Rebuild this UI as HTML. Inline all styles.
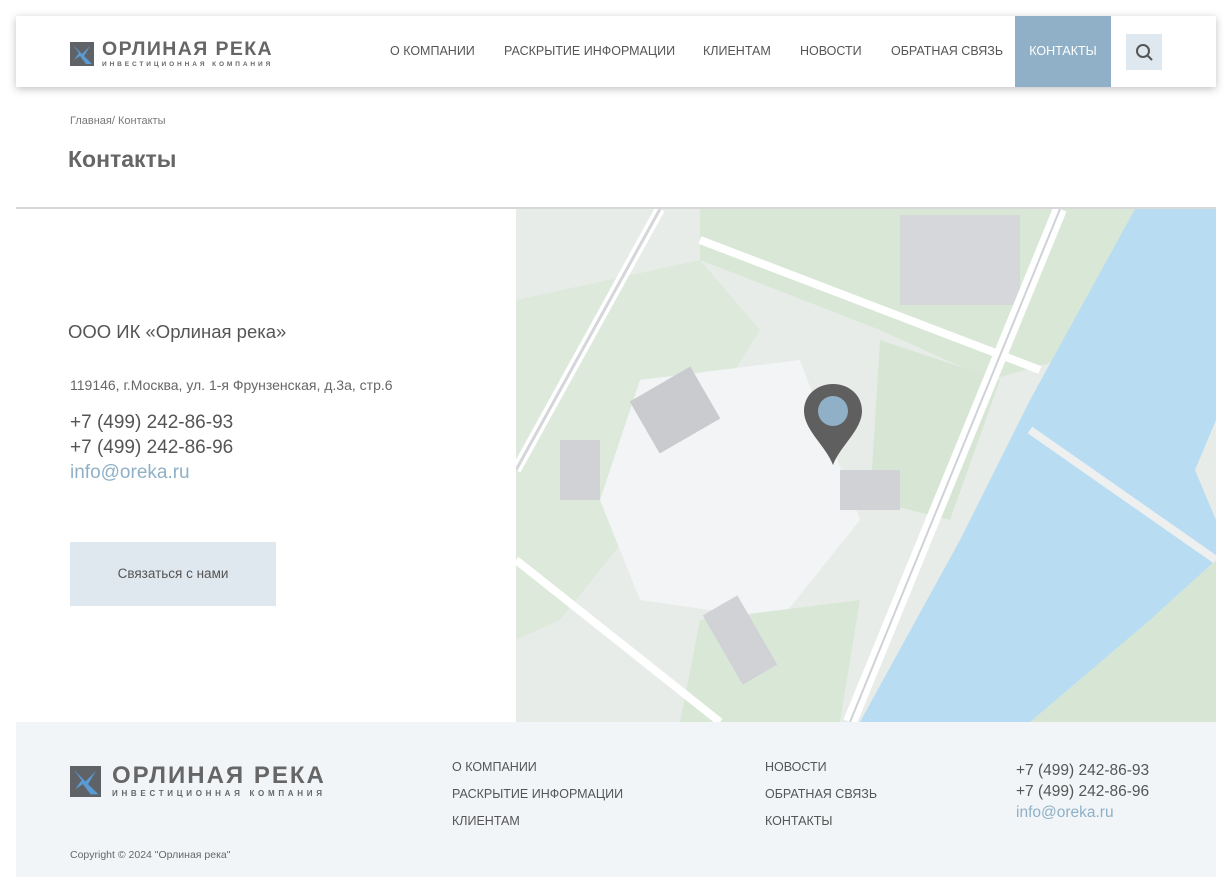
<!DOCTYPE html>
<html><head><meta charset="utf-8"><style>
*{margin:0;padding:0;box-sizing:border-box}
body{width:1232px;height:877px;background:#fff;font-family:"Liberation Sans",sans-serif;color:#555;position:relative;overflow:hidden}
.hdr{position:absolute;left:16px;top:16px;width:1200px;height:71px;background:#fff;box-shadow:0 2px 8px rgba(0,0,0,.25)}
.logo{position:absolute;display:flex;align-items:center}
.logo .t1{font-weight:bold;color:#666;letter-spacing:1.4px}
.logo .t2{font-weight:bold;color:#666}
.nav{position:absolute;top:0;height:71px;font-size:12.5px;color:#555;line-height:71px}
.nav span{position:absolute;white-space:nowrap}
.act{position:absolute;left:999px;top:0;width:96px;height:71px;background:#8fb0c6;color:#fff;text-align:center;line-height:71px;font-size:12.5px}
.srch{position:absolute;left:1110px;top:18px;width:36px;height:36px;background:#dfe7ef}
.a{position:absolute;white-space:nowrap}
.foot{position:absolute;left:16px;top:722px;width:1200px;height:155px;background:#f2f5f8}
</style></head><body>
<div class="hdr">
 <div class="logo" style="left:54px;top:24px">
  <svg width="24" height="24" viewBox="0 0 24 24"><rect width="24" height="24" fill="#5f6368"/><path d="M3 3 L12 12 L20 4 L14 14 L22 22 L16 22 L10 14 L4 18 L9 11 Z" fill="#5b9bd5"/></svg>
  <div style="margin-left:8px;line-height:1"><div class="t1" style="font-size:19.5px">ОРЛИНАЯ РЕКА</div><div class="t2" style="font-size:6.5px;letter-spacing:2.9px;margin-top:2px">ИНВЕСТИЦИОННАЯ КОМПАНИЯ</div></div>
 </div>
 <div class="nav"><span style="left:374px">О КОМПАНИИ</span><span style="left:488px">РАСКРЫТИЕ ИНФОРМАЦИИ</span><span style="left:687px">КЛИЕНТАМ</span><span style="left:784px">НОВОСТИ</span><span style="left:875px">ОБРАТНАЯ СВЯЗЬ</span></div>
 <div class="act">КОНТАКТЫ</div>
 <div class="srch"><svg width="36" height="36"><circle cx="17" cy="17" r="6" stroke="#555" stroke-width="2" fill="none"/><line x1="21.5" y1="21.5" x2="26" y2="26" stroke="#555" stroke-width="2"/></svg></div>
</div>
<div class="a" style="left:70px;top:115px;font-size:11px;color:#777">Главная/ Контакты</div>
<div class="a" style="left:68px;top:146px;font-size:23px;font-weight:bold;color:#666">Контакты</div>
<div style="position:absolute;left:16px;top:207px;width:1200px;height:2px;background:#d8d8d8"></div>
<div class="a" style="left:68px;top:321px;font-size:18.5px;color:#555">ООО ИК «Орлиная река»</div>
<div class="a" style="left:70px;top:377px;font-size:14px;color:#666">119146, г.Москва, ул. 1-я Фрунзенская, д.3а, стр.6</div>
<div class="a" style="left:70px;top:410px;font-size:19px;color:#555;line-height:25px">+7 (499) 242-86-93<br>+7 (499) 242-86-96<br><span style="color:#8fb0c6">info@oreka.ru</span></div>
<div style="position:absolute;left:70px;top:542px;width:206px;height:64px;background:#dfe7ef;text-align:center;line-height:64px;font-size:13.5px;color:#555">Связаться с нами</div>
<svg style="position:absolute;left:516px;top:209px" width="700" height="513" viewBox="516 209 700 513">
<rect x="516" y="209" width="700" height="513" fill="#e8ece9"/>
<path d="M700 209 L1135 209 L1060 360 L990 380 L880 330 L700 260Z" fill="#d9e8d6"/>
<path d="M516 300 L700 260 L760 330 L640 520 L560 620 L516 640Z" fill="#dde9da"/>
<path d="M640 380 L800 360 L860 520 L780 620 L640 600 L600 500Z" fill="#f3f4f5"/>
<path d="M880 340 L1000 380 L950 520 L870 500Z" fill="#d7e6d4"/>
<path d="M700 620 L860 600 L840 722 L680 722Z" fill="#d9e8d6"/>
<path d="M1216 560 L1216 722 L1030 722 L1150 620Z" fill="#d7e6d4"/>
<rect x="900" y="215" width="120" height="90" fill="#d5d7db"/><rect x="640" y="380" width="70" height="60" fill="#c9cbcf" transform="rotate(-30 675 410)"/>
<rect x="560" y="440" width="40" height="60" fill="#d0d2d6"/><rect x="720" y="600" width="40" height="80" fill="#d0d2d6" transform="rotate(-30 740 640)"/>
<rect x="840" y="470" width="60" height="40" fill="#d0d2d6"/>
<path d="M660 209 L516 470" stroke="#fff" stroke-width="10"/><path d="M660 209 L516 470" stroke="#d4d6da" stroke-width="3"/>
<path d="M700 240 L1040 370" stroke="#fff" stroke-width="8"/>
<path d="M1060 209 L850 722" stroke="#fff" stroke-width="14"/><path d="M1060 209 L850 722" stroke="#cfd2d6" stroke-width="2"/>
<path d="M516 560 L720 722" stroke="#fff" stroke-width="8"/>
<path d="M1135 209 L1216 209 L1216 420 L1195 470 L1216 520 L1216 560 L1150 620 L1030 722 L860 722 L960 540 L1030 400Z" fill="#b8dcf2"/>
<path d="M1030 430 L1216 560" stroke="#eef0f0" stroke-width="8"/>
<path d="M862 411 C862 395 849 384 833 384 C817 384 804 395 804 411 C804 430 826 446 833 465 C840 446 862 430 862 411Z" fill="#5f5f5f"/>
<circle cx="833" cy="411" r="15" fill="#8fb0c6"/>
</svg>
<div class="foot">
 <div class="logo" style="left:54px;top:42px">
  <svg width="31" height="31" viewBox="0 0 24 24"><rect width="24" height="24" fill="#5f6368"/><path d="M3 3 L12 12 L20 4 L14 14 L22 22 L16 22 L10 14 L4 18 L9 11 Z" fill="#5b9bd5"/></svg>
  <div style="margin-left:11px;line-height:1"><div class="t1" style="font-size:24px;letter-spacing:2px">ОРЛИНАЯ РЕКА</div><div class="t2" style="font-size:8px;letter-spacing:3.7px;margin-top:2px">ИНВЕСТИЦИОННАЯ КОМПАНИЯ</div></div>
 </div>
 <div class="a" style="left:436px;top:32px;font-size:12.5px;line-height:27px;color:#555">О КОМПАНИИ<br>РАСКРЫТИЕ ИНФОРМАЦИИ<br>КЛИЕНТАМ</div>
 <div class="a" style="left:749px;top:32px;font-size:12.5px;line-height:27px;color:#555">НОВОСТИ<br>ОБРАТНАЯ СВЯЗЬ<br>КОНТАКТЫ</div>
 <div class="a" style="left:1000px;top:38px;font-size:15.5px;line-height:21px;color:#555">+7 (499) 242-86-93<br>+7 (499) 242-86-96<br><span style="color:#8fb0c6">info@oreka.ru</span></div>
 <div class="a" style="left:54px;top:127px;font-size:10.5px;color:#666">Copyright © 2024 "Орлиная река"</div>
</div>
</body></html>
